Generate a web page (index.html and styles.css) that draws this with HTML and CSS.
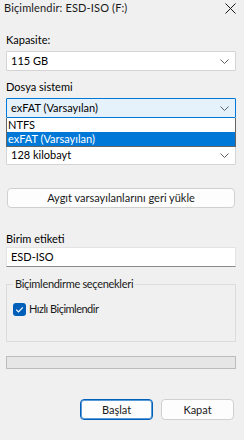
FILE: index.html
```html
<!DOCTYPE html>
<html lang="tr">
<head>
<meta charset="utf-8">
<link rel="stylesheet" href="styles.css">
</head>
<body>
<div class="dialog">
  <div class="titlebar">
    <span class="title">Biçimlendir: ESD-ISO (F:)</span>
    <svg class="close" width="11" height="11" viewBox="0 0 11 11"><path d="M0.5 0.5 L10.5 10.5 M10.5 0.5 L0.5 10.5" stroke="#1a1a1a" stroke-width="1" fill="none"/></svg>
  </div>
  <div class="content">
    <div class="label">Kapasite:</div>
    <div class="combo"><span>115 GB</span><svg class="chev" width="9" height="5" viewBox="0 0 9 5"><path d="M0.5 0.5 L4.5 4.5 L8.5 0.5" stroke="#606060" fill="none"/></svg></div>

    <div class="label gap">Dosya sistemi</div>
    <div class="dropwrap">
      <div class="combo focused"><span>exFAT (Varsayılan)</span><svg class="chev" width="9" height="5" viewBox="0 0 9 5"><path d="M0.5 0.5 L4.5 4.5 L8.5 0.5" stroke="#606060" fill="none"/></svg></div>
      <div class="droplist">
        <div class="item">NTFS</div>
        <div class="item selected">exFAT (Varsayılan)</div>
      </div>
    </div>

    <div class="label gap spacer"></div>
    <div class="combo"><span>128 kilobayt</span><svg class="chev" width="9" height="5" viewBox="0 0 9 5"><path d="M0.5 0.5 L4.5 4.5 L8.5 0.5" stroke="#606060" fill="none"/></svg></div>

    <button class="btn wide">Aygıt varsayılanlarını geri yükle</button>

    <div class="label gap-lg">Birim etiketi</div>
    <div class="textbox">ESD-ISO</div>

    <div class="group">
      <div class="legend">Biçimlendirme seçenekleri</div>
      <div class="check-row">
        <span class="checkbox"><svg width="13" height="13" viewBox="0 0 13 13"><path d="M3.2 6.6 L5.5 8.9 L9.8 4.4" stroke="#fff" stroke-width="1.2" fill="none"/></svg></span>
        <span class="check-label">Hızlı Biçimlendir</span>
      </div>
    </div>

    <div class="progress"></div>

    <div class="actions">
      <button class="btn primary">Başlat</button>
      <button class="btn">Kapat</button>
    </div>
  </div>
</div>
</body>
</html>
```

FILE: styles.css
```css
* { box-sizing: border-box; }
html, body {
  margin: 0;
  padding: 0;
  background: #f0f0f0;
}
body {
  font-family: Lato, "Noto Sans", sans-serif;
  font-size: 11px;
  line-height: 16px;
  color: #000;
}
.dialog {
  width: 244px;
  height: 440px;
  overflow: hidden;
}
.titlebar {
  height: 32px;
  display: flex;
  align-items: flex-start;
  justify-content: space-between;
  padding: 0 8px 0 4px;
}
.title {
  color: #1a1a1a;
  letter-spacing: 0.15px;
}
.close { margin-top: 3px; }
.content {
  padding: 0 8px 0 6px;
  display: flex;
  flex-direction: column;
}
.label {
  height: 16px;
  margin-bottom: 3px;
}
.label.gap { margin-top: 8px; }
.label.gap-lg { margin-top: 23px; margin-bottom: 0; }
.combo {
  height: 20px;
  background: #fff;
  border: 1px solid #d4d4d4;
  border-radius: 1px;
  display: flex;
  align-items: center;
  justify-content: space-between;
  padding: 0 4px 0 4px;
}
.combo .chev { margin-right: 2px; }
.combo.focused {
  background: #e5f1fb;
  border-color: #0078d7;
}
.dropwrap { position: relative; }
.droplist {
  position: absolute;
  left: 0;
  right: 0;
  top: 20px;
  background: #fff;
  border: 1px solid #646464;
  border-top: none;
  z-index: 2;
}
.item {
  height: 14px;
  line-height: 14px;
  padding-left: 1px;
}
.item.selected {
  background: #0078d7;
  color: #fff;
}
.btn {
  font: inherit;
  height: 20px;
  background: #fdfdfd;
  border: 1px solid #d0d0d0;
  border-radius: 4px;
  color: #1a1a1a;
  padding: 0;
}
.btn.wide {
  margin: 23px 1px 0 1px;
}
.textbox {
  height: 20px;
  background: #fff;
  border: 1px solid #e3e3e3;
  border-bottom-color: #8a8a8a;
  padding: 1px 4px 0 4px;
  line-height: 16px;
}
.group {
  margin-top: 17px;
  height: 58px;
  border: 1px solid #dcdcdc;
  position: relative;
  padding: 16px 0 0 6px;
}
.legend {
  position: absolute;
  top: -9px;
  left: 6px;
  padding: 0 2px 0 2px;
  background: #f0f0f0;
  color: #1a1a1a;
  letter-spacing: -0.3px;
}
.check-row {
  display: flex;
  align-items: center;
  gap: 3px;
  color: #1a1a1a;
}
.check-label { letter-spacing: -0.5px; }
.checkbox {
  width: 13px;
  height: 13px;
  background: #005fb8;
  border-radius: 3px;
  display: flex;
}
.progress {
  margin-top: 14px;
  height: 13px;
  background: #e6e6e6;
  border: 1px solid #bcbcbc;
}
.actions {
  margin-top: 30px;
  display: flex;
  justify-content: flex-end;
  gap: 8px;
  padding-right: 2px;
}
.actions .btn {
  width: 73px;
  height: 21px;
}
.btn.primary {
  border: 1px solid #005fb8;
  box-shadow: inset 0 0 0 1px #5a9ad6;
}
```
